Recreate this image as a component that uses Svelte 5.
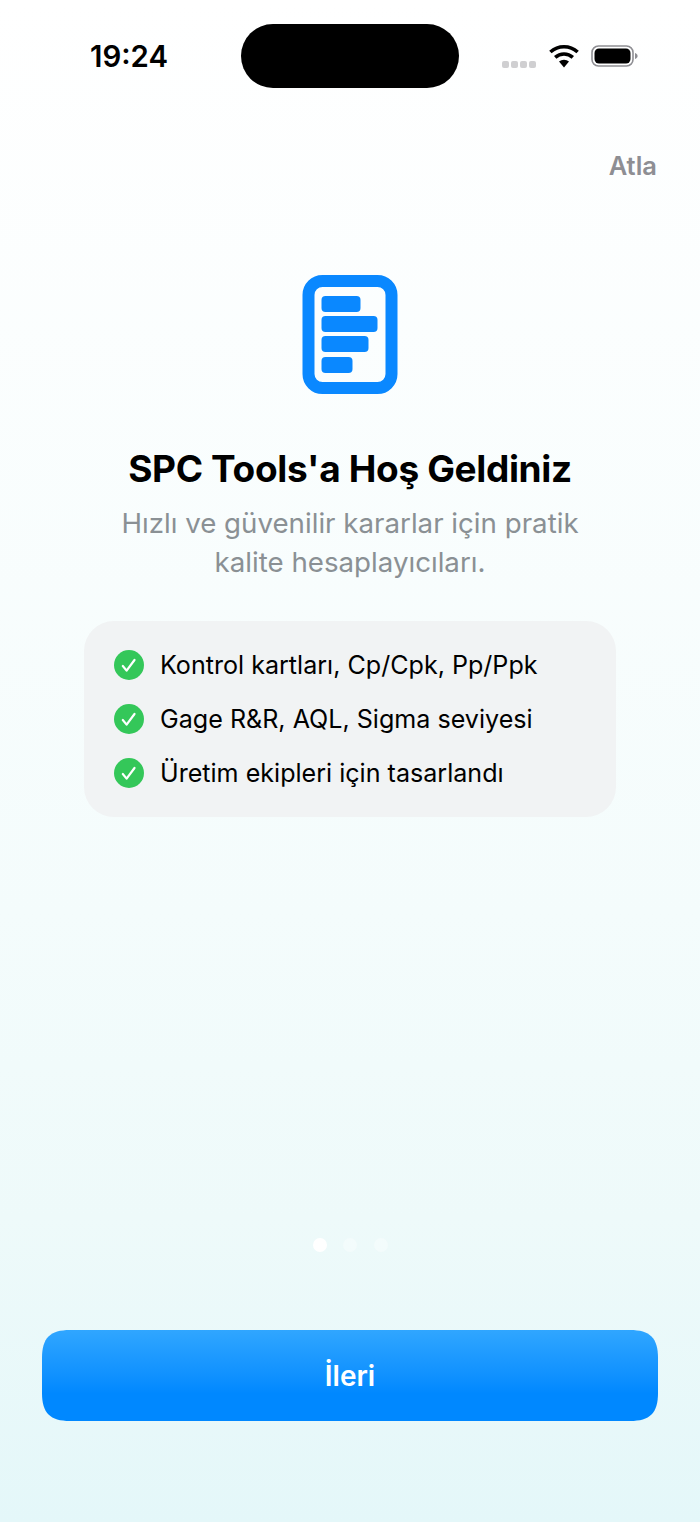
<script>
  const features = ['Kontrol kartları, Cp/Cpk, Pp/Ppk', 'Gage R&R, AQL, Sigma seviyesi', 'Üretim ekipleri için tasarlandı'];
</script>

<div class="screen">
  <header class="status">
    <span class="time">19:24</span>
    <div class="island"></div>
    <div class="indicators">
      <div class="signal"><i></i><i></i><i></i><i></i></div>
      <svg class="wifi" width="32" height="24" viewBox="0 0 32 24">
        <path d="M16 23.5 11 17.6a7.6 7.6 0 0 1 10 0Z" fill="#000"/>
        <path d="M7.2 13.4a13.2 13.2 0 0 1 17.6 0" fill="none" stroke="#000" stroke-width="3.6"/>
        <path d="M2.4 8a20.2 20.2 0 0 1 27.2 0" fill="none" stroke="#000" stroke-width="3.6"/>
      </svg>
      <svg class="battery" width="48" height="24" viewBox="0 0 48 24">
        <rect x="1" y="2" width="41" height="20" rx="6.5" fill="none" stroke="#8e8e93" stroke-width="1.6"/>
        <rect x="3.5" y="4.5" width="36" height="15" rx="4.5" fill="#000"/>
        <path d="M44 9v6c1.600-.5 2.600-1.700 2.600-3S45.600 9.500 44 9Z" fill="#8e8e93"/>
      </svg>
    </div>
  </header>

  <div class="skip-row"><span class="skip">Atla</span></div>

  <svg class="logo" width="96" height="120" viewBox="0 0 96 120">
    <rect x="6.500" y="6" width="83" height="107" rx="14" fill="none" stroke="#0a88ff" stroke-width="12"/>
    <rect x="19.500" y="21" width="39" height="16" rx="4" fill="#0a88ff"/>
    <rect x="19.500" y="41" width="56" height="16" rx="4" fill="#0a88ff"/>
    <rect x="19.500" y="61" width="47" height="16" rx="4" fill="#0a88ff"/>
    <rect x="19.500" y="82" width="31" height="16" rx="4" fill="#0a88ff"/>
  </svg>

  <h1>SPC Tools'a Hoş Geldiniz</h1>
  <p class="subtitle">Hızlı ve güvenilir kararlar için pratik<br />kalite hesaplayıcıları.</p>

  <ul class="card">
    {#each features as f}
      <li>
        <svg width="30" height="30" viewBox="0 0 30 30">
          <circle cx="15" cy="15" r="15" fill="#34c759"/>
          <path d="M8.800 16l3.800 4.600 7.900-10.600" fill="none" stroke="#fff" stroke-width="2.200" stroke-linecap="round" stroke-linejoin="round"/>
        </svg>
        <span>{f}</span>
      </li>
    {/each}
  </ul>

  <div class="spacer"></div>

  <div class="dots"><i class="on"></i><i></i><i></i></div>

  <button class="next">İleri</button>
</div>

<style>
  :global(body) { margin: 0; }
  .screen {
    width: 700px;
    height: 1522px;
    display: flex;
    flex-direction: column;
    align-items: center;
    overflow: hidden;
    font-family: Inter, "Liberation Sans", sans-serif;
    background: linear-gradient(180deg, #ffffff 0%, #f4fcfc 60%, #eefafa 80%, #e4f7f9 100%);
  }
  .status {
    width: 100%;
    box-sizing: border-box;
    height: 88px;
    padding: 24px 62px 0 90px;
    display: flex;
    align-items: flex-start;
  }
  .time {
    flex: none;
    font-size: 29.4px;
    font-weight: 600;
    line-height: 66px;
    width: 151px;
    color: #000;
  }
  .island {
    flex: none;
    width: 218px;
    height: 64px;
    border-radius: 32px;
    background: #000;
  }
  .indicators {
    margin-left: 43px;
    height: 64px;
    flex: 1;
    display: flex;
    align-items: center;
    gap: 12px;
  }
  .signal { display: flex; gap: 2px; margin-top: 17px; }
  .signal i { width: 7px; height: 7px; border-radius: 2px; background: #cfcfd1; }
  .battery { margin-left: -1px; }
  .skip-row {
    width: 100%;
    box-sizing: border-box;
    padding: 61px 43px 0 0;
    display: flex;
    justify-content: flex-end;
  }
  .skip {
    font-size: 25.5px;
    font-weight: 600;
    line-height: 34px;
    color: #8e8e93;
  }
  .logo { margin-top: 92px; display: block; }
  h1 {
    margin: 49px 0 0;
    font-size: 37px;
    font-weight: 700;
    line-height: 50px;
    color: #000;
    letter-spacing: -0.35px;
  }
  .subtitle {
    margin: 10px 0 0;
    text-align: center;
    font-size: 27.7px;
    line-height: 39px;
    color: #8a9094;
  }
  .card {
    list-style: none;
    margin: 39px 0 0;
    padding: 24px 30px;
    width: 532px;
    height: 196px;
    box-sizing: border-box;
    border-radius: 30px;
    background: #f1f3f4;
    display: flex;
    flex-direction: column;
    gap: 14px;
  }
  .card li {
    display: flex;
    align-items: center;
    gap: 16px;
    height: 40px;
    font-size: 25.1px;
    color: #000;
  }
  .card svg { flex: none; }
  .spacer { flex: 1; }
  .dots { display: flex; gap: 16.500px; }
  .dots i { width: 14px; height: 14px; border-radius: 50%; background: rgba(255,255,255,0.35); }
  .dots i.on { background: #fff; }
  .next {
    margin: 78px 0 101px;
    width: 616px;
    height: 91px;
    border: 0;
    clip-path: path('M28 0H588C608 0 616 8 616 28V63C616 83 608 91 588 91H28C8 91 0 83 0 63V28C0 8 8 0 28 0Z');
    background: linear-gradient(180deg, #30a6ff 0%, #1091ff 50%, #0088ff 70%, #0088ff 100%);
    color: #fff;
    font-family: inherit;
    font-size: 28px;
    font-weight: 600;
  }
</style>
